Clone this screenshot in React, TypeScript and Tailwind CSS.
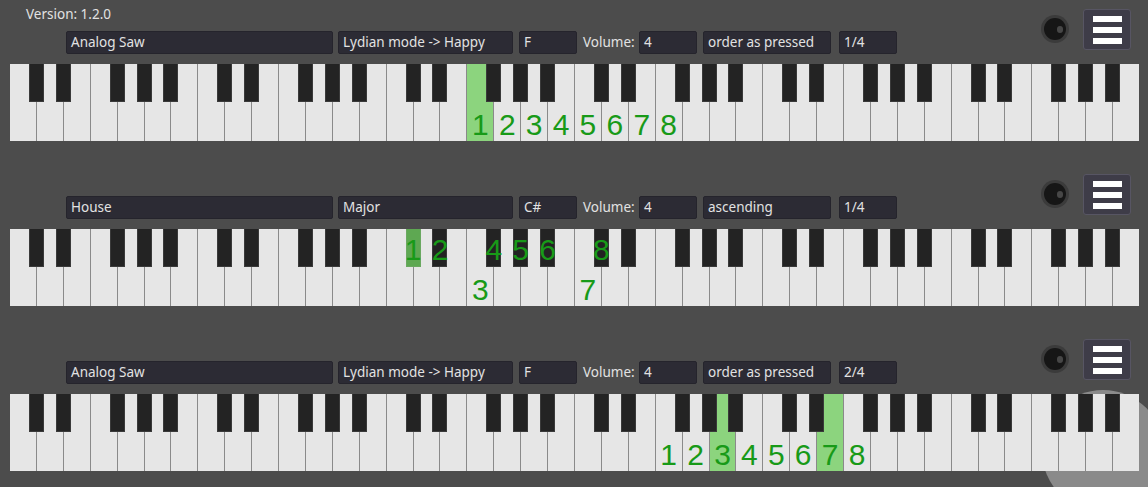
import React from "react";

const PITCH = 1130 / 42;
const BLACK_OFFSETS = [1, 2, 4, 5, 6];

type Row = {
  name: string;
  scale: string;
  keyName: string;
  vol: string;
  order: string;
  div: string;
  whiteLabels: Record<number, number>;
  blackLabels: Record<number, number>;
  whiteHi: number[];
  blackHi: number[];
  version?: boolean;
};

const rows: Row[] = [
  {
    name: "Analog Saw",
    scale: "Lydian mode -> Happy",
    keyName: "F",
    vol: "4",
    order: "order as pressed",
    div: "1/4",
    whiteLabels: { 17: 1, 18: 2, 19: 3, 20: 4, 21: 5, 22: 6, 23: 7, 24: 8 },
    blackLabels: {},
    whiteHi: [17],
    blackHi: [],
    version: true,
  },
  {
    name: "House",
    scale: "Major",
    keyName: "C#",
    vol: "4",
    order: "ascending",
    div: "1/4",
    whiteLabels: { 17: 3, 21: 7 },
    blackLabels: { 15: 1, 16: 2, 18: 4, 19: 5, 20: 6, 22: 8 },
    whiteHi: [],
    blackHi: [15],
  },
  {
    name: "Analog Saw",
    scale: "Lydian mode -> Happy",
    keyName: "F",
    vol: "4",
    order: "order as pressed",
    div: "2/4",
    whiteLabels: { 24: 1, 25: 2, 26: 3, 27: 4, 28: 5, 29: 6, 30: 7, 31: 8 },
    blackLabels: {},
    whiteHi: [26, 30],
    blackHi: [],
  },
];

const blackBoundaries: number[] = [];
for (let o = 0; o < 6; o++) for (const b of BLACK_OFFSETS) blackBoundaries.push(o * 7 + b);

function Field({ text, w }: { text: string; w: string }) {
  return (
    <div
      className={`${w} h-[23px] bg-[#2c2b34] border border-[#25242c] rounded-[2px] flex items-center pl-[4px] text-[13.5px] text-[#e2e2e2] leading-none whitespace-nowrap overflow-hidden`}
    >
      {text}
    </div>
  );
}

function Num({ n }: { n: number }) {
  return (
    <span className="font-['Liberation_Sans',Arial,sans-serif] text-[30px] leading-none text-[#189a18]">
      {n}
    </span>
  );
}

function Keyboard({ row }: { row: Row }) {
  return (
    <div className="relative ml-[10px] mt-[10px] w-[1129px] h-[77px] bg-[#8a8a8a] grid grid-cols-[repeat(42,minmax(0,1fr))] gap-px">
      {Array.from({ length: 42 }).map((_, i) => {
        const hi = row.whiteHi.includes(i);
        const lab = row.whiteLabels[i];
        return (
          <div
            key={i}
            className={`${hi ? "bg-[#8cd47e]" : "bg-[#e6e6e6]"} flex items-end justify-center pb-[1px]`}
          >
            {lab !== undefined && <Num n={lab} />}
          </div>
        );
      })}
      {blackBoundaries.map((k) => {
        const hi = row.blackHi.includes(k);
        const lab = row.blackLabels[k];
        return (
          <div
            key={"b" + k}
            className={`absolute top-0 h-[38px] w-[15px] ${hi ? "bg-[#5ea852] border-[#6aa860]" : "bg-[#232323] border-[#3a3a3a]"} border border-t-0 flex items-end justify-center pb-[1px] overflow-visible`}
            style={{ left: k * PITCH - 8 }}
          >
            {lab !== undefined && <Num n={lab} />}
          </div>
        );
      })}
    </div>
  );
}

function Section({ row }: { row: Row }) {
  return (
    <div className="relative z-10 h-[165px]">
      <div className="flex items-start h-[54px]">
        <div className="flex flex-col">
          <div className="h-[31px] pl-[26px] pt-[4px] text-[13.5px] text-[#e2e2e2] leading-[20px]">
            {row.version ? "Version: 1.2.0" : ""}
          </div>
          <div className="flex items-center ml-[66px]">
            <Field text={row.name} w="w-[267px]" />
            <div className="ml-[5px]"><Field text={row.scale} w="w-[175px]" /></div>
            <div className="ml-[6px]"><Field text={row.keyName} w="w-[58px]" /></div>
            <div className="ml-[6px] w-[56px] text-[13.5px] text-[#e2e2e2] leading-none whitespace-nowrap">Volume:</div>
            <Field text={row.vol} w="w-[58px]" />
            <div className="ml-[6px]"><Field text={row.order} w="w-[128px]" /></div>
            <div className="ml-[8px]"><Field text={row.div} w="w-[58px]" /></div>
          </div>
        </div>
        <div className="ml-[144px] mt-[15px] w-[28px] h-[28px] rounded-full bg-[#3b3b3b] flex items-center justify-center">
          <div className="w-[22px] h-[22px] rounded-full bg-[#161616] flex items-center justify-end pr-[3px]">
            <div className="w-[6px] h-[7px] rounded-full bg-[#474747]" />
          </div>
        </div>
        <div className="ml-[14px] mt-[9px] w-[48px] h-[41px] rounded-[3px] bg-[#3e3c48] border border-[#575563] flex flex-col items-center justify-center gap-[5px]">
          <div className="w-[29px] h-[6px] bg-white" />
          <div className="w-[29px] h-[6px] bg-white" />
          <div className="w-[29px] h-[6px] bg-white" />
        </div>
      </div>
      <Keyboard row={row} />
    </div>
  );
}

export default function App() {
  return (
    <div className="relative w-[1148px] h-[487px] overflow-hidden bg-[#4c4c4c] font-['Noto_Sans',sans-serif]">
      <div className="absolute left-[1042px] top-[390px] w-[122px] h-[122px] rounded-full bg-white/35 z-0" />
      {rows.map((r, i) => (
        <Section key={i} row={r} />
      ))}
    </div>
  );
}
